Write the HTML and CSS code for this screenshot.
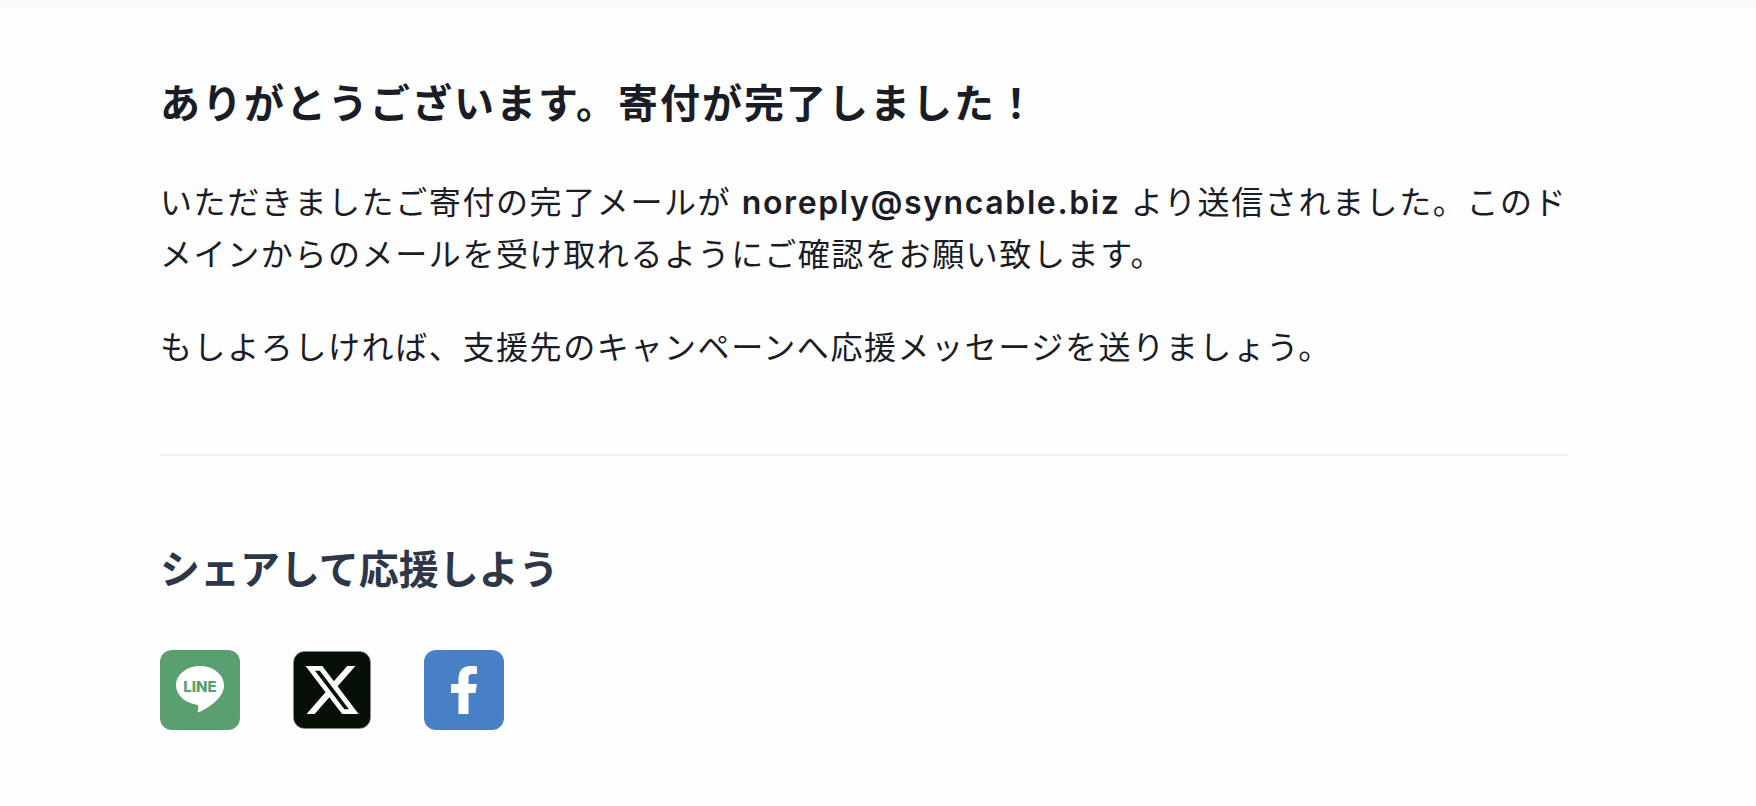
FILE: index.html
```html
<!DOCTYPE html>
<html lang="ja">
<head>
<meta charset="utf-8">
<meta name="viewport" content="width=device-width, initial-scale=1.0">
<title>寄付完了</title>
<link rel="stylesheet" href="styles.css">
</head>
<body>
<main class="container">
  <section class="thanks">
    <h1>ありがとうございます。寄付が完了しました！</h1>
    <p>いただきましたご寄付の完了メールが <strong>noreply@syncable.biz</strong> より送信されました。このドメインからのメールを受け取れるようにご確認をお願い致します。</p>
    <p>もしよろしければ、支援先のキャンペーンへ応援メッセージを送りましょう。</p>
  </section>
  <section class="share">
    <h2>シェアして応援しよう</h2>
    <div class="share-links">
      <a href="#" aria-label="LINE">
        <svg class="share-icon" viewBox="0 0 80 80">
          <rect width="80" height="80" rx="12" fill="#5a9f70"/>
          <path d="M40 16C26.700 16 16 24.600 16 35.300c0 9.600 8.500 17.600 20 19.100 1.800.4 2.500 1.300 2.300 3l-.5 3.500c-.2 1.200.4 1.700 1.500 1.200C48 58 64 48.500 64 35.300 64 24.600 53.300 16 40 16z" fill="#fff"/>
          <text class="line-label" x="40" y="42" text-anchor="middle">LINE</text>
        </svg>
      </a>
      <a href="#" aria-label="X">
        <svg class="share-icon" viewBox="0 0 80 80">
          <rect x="1.500" y="1.500" width="77" height="77" rx="11" fill="#061006" stroke="#8a8d8a" stroke-width=".6"/>
          <path transform="translate(10.400 10.500) scale(2.460)" d="M18.244 2.250h3.308l-7.227 8.260 8.502 11.240H16.170l-5.214-6.817L4.990 21.750H1.680l7.730-8.835L1.254 2.250H8.080l4.713 6.231zm-1.161 17.520h1.833L7.084 4.126H5.117z" fill="#fff"/>
        </svg>
      </a>
      <a href="#" aria-label="Facebook">
        <svg class="share-icon" viewBox="0 0 80 80">
          <rect width="80" height="80" rx="12" fill="#4880c8"/>
          <path d="M34.500 64V43H27v-9h7.500v-5.500C34.500 20.500 39.200 16 46.500 16c2.600 0 4.800.1 6.500.4V24h-4.200c-3.500 0-4.300 1.700-4.300 4.200V34h8.400l-1.300 9h-7.100v21z" fill="#fff"/>
        </svg>
      </a>
    </div>
  </section>
</main>
</body>
</html>
```
FILE: styles.css
```css
:root {
  --text: #1a1c26;
  --heading: #2d3748;
  --border: #edf2f7;
}
* {
  box-sizing: border-box;
}
body {
  margin: 0;
  background: #fefefe linear-gradient(#f9f9f9, #fefefe 16px) no-repeat;
  color: var(--text);
  font-family: Inter, "Noto Sans CJK JP", sans-serif;
  font-size: 32px;
  line-height: 52px;
}
.container {
  max-width: 1728px;
  padding: 72px 160px;
}
h1, h2, p {
  margin: 0;
}
h1, h2 {
  font-size: 40px;
  line-height: 64px;
  font-weight: 700;
}
h1, p {
  letter-spacing: 0.05em;
}
strong {
  font-weight: 600;
}
.thanks {
  display: flex;
  flex-direction: column;
  gap: 41px;
  padding-bottom: 80px;
  border-bottom: 2px solid var(--border);
}
.share {
  padding-top: 82px;
}
.share h2 {
  color: var(--heading);
}
.share-links {
  display: flex;
  gap: 52px;
  margin-top: 48px;
}
.share-links a {
  display: block;
}
.share-icon {
  display: block;
  width: 80px;
  height: 80px;
}
.line-label {
  font-family: Inter, sans-serif;
  font-size: 15px;
  font-weight: 800;
  fill: #5a9f70;
}
```
